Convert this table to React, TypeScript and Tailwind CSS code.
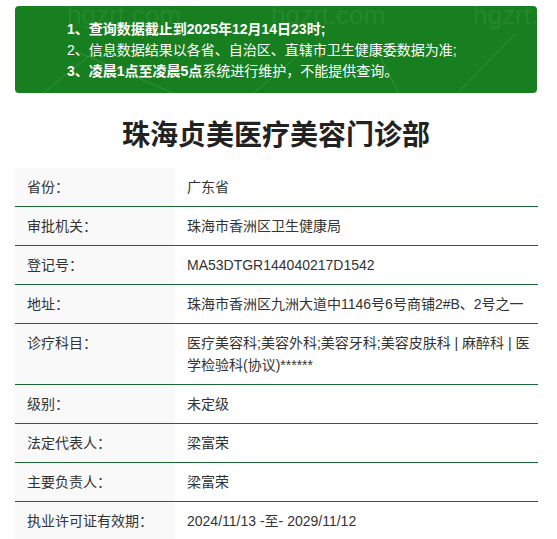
import React from 'react';

const rows: { label: string; value: React.ReactNode }[] = [
  { label: '省份：', value: '广东省' },
  { label: '审批机关：', value: '珠海市香洲区卫生健康局' },
  { label: '登记号：', value: 'MA53DTGR144040217D1542' },
  { label: '地址：', value: '珠海市香洲区九洲大道中1146号6号商铺2#B、2号之一' },
  {
    label: '诊疗科目：',
    value: (
      <>
        <span className="whitespace-nowrap">医疗美容科;美容外科;美容牙科;美容皮肤科 | 麻醉科 | 医</span>
        <br />
        学检验科(协议)******
      </>
    ),
  },
  { label: '级别：', value: '未定级' },
  { label: '法定代表人：', value: '梁富荣' },
  { label: '主要负责人：', value: '梁富荣' },
  { label: '执业许可证有效期：', value: '2024/11/13 -至- 2029/11/12' },
];

function Watermark() {
  return (
    <div aria-hidden className="absolute inset-0 pointer-events-none overflow-hidden">
      {[52, 256, 458].map(x => (
        <span
          key={x}
          className="absolute top-[-6px] text-[26px] leading-[30px] text-white/[0.08] font-['Liberation_Sans',sans-serif]"
          style={{ left: x }}
        >
          hgzrt.com
        </span>
      ))}
      <svg className="absolute inset-0" width="522" height="87" viewBox="0 0 522 87">
        <g stroke="rgba(255,255,255,0.14)" strokeWidth="1" fill="none">
          <line x1="25" y1="90" x2="80" y2="45" />
          <line x1="60" y1="45" x2="165" y2="90" />
          <line x1="235" y1="90" x2="285" y2="48" />
          <line x1="365" y1="50" x2="385" y2="90" />
          <line x1="440" y1="90" x2="500" y2="28" />
        </g>
      </svg>
    </div>
  );
}

export default function App() {
  return (
    <div className="min-h-screen bg-white px-[15px] pt-[6px] font-['Liberation_Sans','Noto_Sans_CJK_SC',sans-serif] text-[#333]">
      <div className="w-[522px]">
        {/* Notice */}
        <div className="relative bg-[#177f20] rounded-[4px] pl-[52px] pt-[13px] pb-[11px] text-white text-[14px] leading-[21px]">
          <Watermark />
          <p className="relative font-bold">1、查询数据截止到2025年12月14日23时;</p>
          <p className="relative">2、信息数据结果以各省、自治区、直辖市卫生健康委数据为准;</p>
          <p className="relative">
            <span className="font-bold">3、凌晨1点至凌晨5点</span>系统进行维护，不能提供查询。
          </p>
        </div>

        {/* Title */}
        <h1 className="mt-[23px] mb-[12px] text-center text-[28px] leading-[40px] font-semibold text-[#222]">
          珠海贞美医疗美容门诊部
        </h1>

        {/* Table */}
        <div className="w-[523px] text-[14px] leading-[22px]">
          {rows.map(r => (
            <div key={r.label} className="flex border-b border-[#1b6634]">
              <div className="w-[160px] shrink-0 bg-[#f9f9f9] px-[12px] py-[8px]">{r.label}</div>
              <div className="flex-1 px-[12px] py-[8px]">{r.value}</div>
            </div>
          ))}
        </div>
      </div>
    </div>
  );
}
